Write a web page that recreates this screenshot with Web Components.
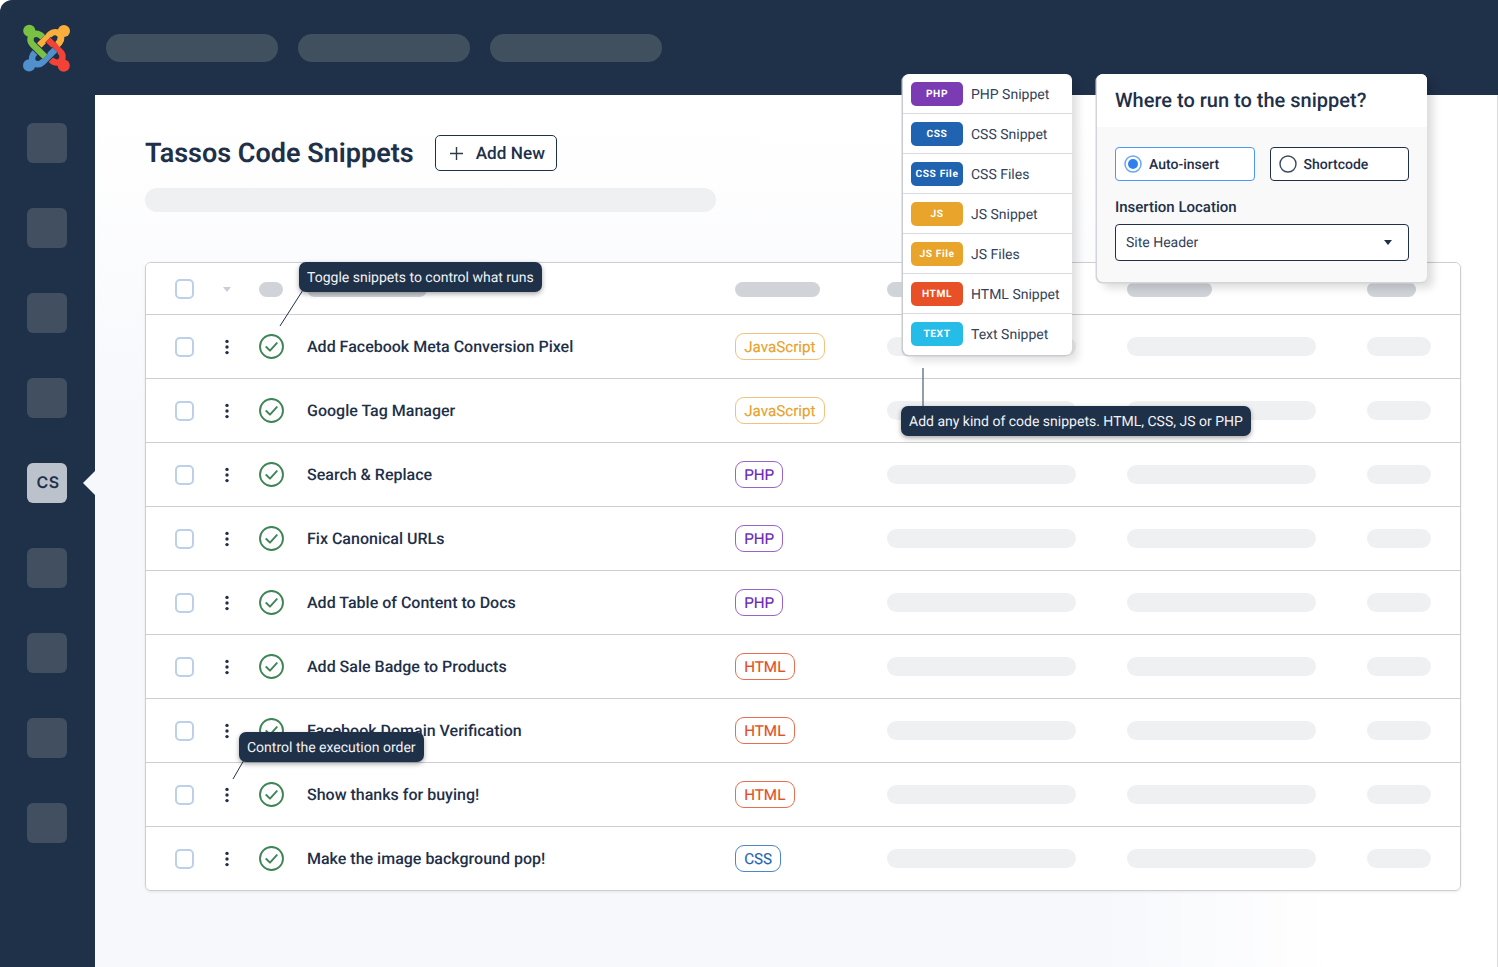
<!DOCTYPE html>
<html><head><meta charset="utf-8">
<style>
html,body{margin:0;padding:0;background:#fff;font-family:Roboto,"Liberation Sans",sans-serif;color:#1f3049;text-rendering:geometricPrecision}
body{width:1498px;height:967px;overflow:hidden}
</style></head><body>
<app-frame>
  <top-bar slot="top"></top-bar>
  <side-bar slot="side"></side-bar>
  <page-main slot="main">
    <page-head slot="head">Tassos Code Snippets</page-head>
    <snippet-table slot="table"></snippet-table>
  </page-main>
  <type-menu slot="over"></type-menu>
  <run-panel slot="over"></run-panel>
  <hint-tip slot="over" x="299" y="262" lx1="303" ly1="290" lx2="280" ly2="326">Toggle snippets to control what runs</hint-tip>
  <hint-tip slot="over" x="239" y="732" lx1="244" ly1="760" lx2="233" ly2="779">Control the execution order</hint-tip>
  <hint-tip slot="over" x="901" y="406" lx1="923" ly1="408" lx2="923" ly2="368" lc="#66758a" lw="1.4">Add any kind of code snippets. HTML, CSS, JS or PHP</hint-tip>
</app-frame>
<script>
const NAVY='#1f3049';
class Base extends HTMLElement{
  constructor(){super();this.attachShadow({mode:'open'});}
  connectedCallback(){if(!this._r){this._r=1;this.shadowRoot.innerHTML=`<style>${this.css()}</style>${this.html()}`;}}
  css(){return ''} html(){return '<slot></slot>'}
}
const def=(n,css,html)=>customElements.define(n,class extends Base{css(){return css(this)}html(){return html?html(this):'<slot></slot>'}});

def('app-frame',()=>`:host{display:grid;grid-template-columns:95px 1fr;grid-template-rows:95px 1fr;width:1498px;height:967px;background:${NAVY};border-top-left-radius:12px;position:relative;overflow:hidden}
 .t{grid-column:1/3;display:block}`,
 ()=>`<div class="t"><slot name="top"></slot></div><slot name="side"></slot><slot name="main"></slot><slot name="over"></slot>`);

def('j-logo',()=>`:host{display:block;width:50px;height:50px;flex:none}svg{display:block}`,()=>{
  const limb='M42.8 36.8 C38.5 32 32 32 30.6 37.5 C30 40.5 30.8 42.2 32.4 43.8 L45 56.2';
  const rots=[0,90,180,270],cols=['#7ac143','#fbae3c','#f44336','#5091cd'];
  const items=[1,2,3,0].map(i=>`<g transform="rotate(${rots[i]} 46.5 47.7)"><path d="${limb}" fill="none" stroke="${NAVY}" stroke-width="8.2"/><path d="${limb}" fill="none" stroke="${cols[i]}" stroke-width="6.4"/><circle cx="29.3" cy="30.3" r="6.1" fill="${cols[i]}"/></g>`).join('');
  return `<svg width="50" height="50" viewBox="22 22.5 50 50">${items}<g transform="rotate(90 46.5 47.7)"><path d="M42.8 36.8 C40.5 34.2 38 33 35.5 33" fill="none" stroke="#fbae3c" stroke-width="6.4"/></g></svg>`;
});

def('skel-pill',e=>{const w=e.getAttribute('w'),h=e.getAttribute('h')||19,c=e.getAttribute('c')||'#eff0f2';
  return `:host{display:block;width:${w}px;height:${h}px;border-radius:${h/2}px;background:${c};flex:none}`},()=>'');

def('top-bar',()=>`:host{display:flex;height:95px;align-items:center;padding-left:22px;box-sizing:border-box}
 .p{display:flex;gap:20px;margin-left:34px}`,
 ()=>`<j-logo></j-logo><div class="p"><skel-pill w="172" h="28" c="#40505f"></skel-pill><skel-pill w="172" h="28" c="#40505f"></skel-pill><skel-pill w="172" h="28" c="#40505f"></skel-pill></div>`);

def('side-tile',e=>{const a=e.hasAttribute('active');return `:host{display:flex;width:40px;height:40px;box-sizing:border-box;padding:0 0 2px 2px;border-radius:6px;background:${a?'#bcc2cc':'#414f61'};align-items:center;justify-content:center;position:relative;font:600 16px Inter,Roboto,sans-serif;letter-spacing:.3px;color:${NAVY}}
 ${a?':host::after{content:"";position:absolute;left:56px;top:8px;border-style:solid;border-color:transparent #f6f8fc transparent transparent;border-width:12px 12px 12px 0}':''}`});

def('side-bar',()=>`:host{display:flex;flex-direction:column;gap:45px;box-sizing:border-box;padding:28px 0 0 27px}`,
 ()=>Array.from({length:9},(_,i)=>i==4?'<side-tile active>CS</side-tile>':'<side-tile></side-tile>').join(''));

def('page-main',()=>`:host{display:block;box-sizing:border-box;padding:40px 0 0 50px;border-right:1px solid #dcdcdc;
 background:linear-gradient(90deg,rgba(255,255,255,0) 1000px,#fff 1240px),linear-gradient(180deg,#fff 30px,#f7f8fc 320px)}
 .sk{margin:17px 0 50px}`,
 ()=>`<slot name="head"></slot><div class="sk"><skel-pill w="571" h="24"></skel-pill></div><slot name="table"></slot>`);

def('page-head',()=>`:host{display:flex;align-items:center;gap:21px;height:36px}
 h1{margin:0;font:600 27px Roboto,sans-serif;color:${NAVY};white-space:nowrap}`,
 ()=>`<h1><slot></slot></h1><add-button>Add New</add-button>`);

def('add-button',()=>`:host{display:flex;align-items:center;box-sizing:border-box;width:122px;height:36px;border:1px solid ${NAVY};border-radius:5px;padding-left:14px;gap:13px;font:500 17.2px Roboto,sans-serif;color:${NAVY};background:#fff}svg{display:block}span{padding-top:2px}`,
 ()=>`<svg width="13" height="13" viewBox="0 0 13 13"><path d="M6.5 0v13M0 6.5h13" stroke="#2f3a48" stroke-width="1.4" fill="none"/></svg><span><slot></slot></span>`);

def('row-check',()=>`:host{display:block;width:19px;height:20px;box-sizing:border-box;border:2px solid #bdd0e9;border-radius:5px;background:#fff}`,()=>'');
def('row-dots',()=>`:host{display:block;width:8px;height:16px}svg{display:block}`,
 ()=>`<svg width="8" height="16" viewBox="0 0 8 16"><circle cx="4" cy="2.4" r="1.7" fill="${NAVY}"/><circle cx="4" cy="8" r="1.7" fill="${NAVY}"/><circle cx="4" cy="13.6" r="1.7" fill="${NAVY}"/></svg>`);
def('status-ok',()=>`:host{display:block;width:25px;height:25px}svg{display:block}`,
 ()=>`<svg width="25" height="25" viewBox="0 0 25 25"><circle cx="12.5" cy="12.5" r="11.5" fill="none" stroke="#3f8557" stroke-width="1.9"/><path d="M7.3 13l3.7 3.7 6.8-7.6" fill="none" stroke="#3f8557" stroke-width="1.9" stroke-linecap="round" stroke-linejoin="round"/></svg>`);

const LANG={js:['#e8a22f','#f2c27a'],php:['#6b2bb5','#9a62cc'],html:['#e34f26','#ea6d4e'],css:['#1f64b0','#4a86c8']};
def('lang-tag',e=>{const [c,b]=LANG[e.getAttribute('k')];return `:host{display:inline-flex;justify-self:start;align-items:center;box-sizing:border-box;height:27.5px;padding:0 8.2px;border:1px solid ${b};border-radius:9px;font:400 15.2px Roboto,sans-serif;color:${c};background:#fff;-webkit-text-stroke:.15px ${c}}`});

const GRID=`display:grid;grid-template-columns:48px 36px 48px 428px 152px 240px 240px auto;align-items:center;box-sizing:border-box;padding-left:29px;background:#fff`;
def('snippet-row',()=>`:host{${GRID};height:64px;border-top:1px solid #ccced2}
 .t{font:500 16px Roboto,sans-serif;color:${NAVY};white-space:nowrap}`,
 e=>`<row-check></row-check><row-dots></row-dots><status-ok></status-ok><span class="t"><slot></slot></span><lang-tag k="${e.getAttribute('k')}">${e.getAttribute('l')}</lang-tag><skel-pill w="189"></skel-pill><skel-pill w="189"></skel-pill><skel-pill w="64"></skel-pill>`);

def('table-head',()=>`:host{${GRID};height:51px}
 .c{width:0;height:0;border-style:solid;border-color:#c9ced6 transparent transparent;border-width:5px 4px 0;margin-top:1px}
 skel-pill{margin-top:1px}`,
 ()=>{const c='#d0d4d9';return `<row-check></row-check><div class="c"></div><skel-pill w="24" h="15" c="${c}"></skel-pill><skel-pill w="120" h="15" c="${c}"></skel-pill><skel-pill w="85" h="15" c="${c}"></skel-pill><skel-pill w="85" h="15" c="${c}"></skel-pill><skel-pill w="85" h="15" c="${c}"></skel-pill><skel-pill w="49" h="15" c="${c}"></skel-pill>`});

const ROWS=[['Add Facebook Meta Conversion Pixel','js','JavaScript'],['Google Tag Manager','js','JavaScript'],['Search &amp; Replace','php','PHP'],['Fix Canonical URLs','php','PHP'],['Add Table of Content to Docs','php','PHP'],['Add Sale Badge to Products','html','HTML'],['Facebook Domain Verification','html','HTML'],['Show thanks for buying!','html','HTML'],['Make the image background pop!','css','CSS']];
def('snippet-table',()=>`:host{display:block;width:1316px;box-sizing:border-box;border:1px solid #ccced2;border-radius:6px;background:#fff;overflow:hidden;box-shadow:0 1px 3px rgba(0,0,0,.08)}`,
 ()=>`<table-head></table-head>`+ROWS.map(r=>`<snippet-row k="${r[1]}" l="${r[2]}">${r[0]}</snippet-row>`).join(''));

const TY={php:'#7b3bb3',css:'#2063b0',js:'#e8a42b',html:'#e85027',text:'#26bce8'};
def('type-row',e=>`:host{display:flex;align-items:center;gap:8px;height:40px;box-sizing:border-box;padding-left:8px;border-bottom:1px solid #d9dade;font:400 14px Roboto,sans-serif;color:#34435a;white-space:nowrap}
 :host(:last-child){border-bottom:0;height:41px;padding-bottom:1px}
 span{padding-top:2px}
 b{display:flex;align-items:center;justify-content:center;box-sizing:border-box;padding-top:1px;width:52px;height:24px;border-radius:5px;background:${TY[e.getAttribute('k')]};color:#fff;font:700 10.2px Roboto,sans-serif;letter-spacing:.6px}`,
 e=>`<b>${e.getAttribute('b')}</b><span><slot></slot></span>`);
def('type-menu',()=>`:host{position:absolute;left:903px;top:74px;width:169px;background:#fff;border-radius:6px;box-shadow:-1px 1px 0 .5px #c9cbd0,6px 6px 8px rgba(0,0,0,.12);z-index:5;display:block}`,
 ()=>[['php','PHP','PHP Snippet'],['css','CSS','CSS Snippet'],['css','CSS File','CSS Files'],['js','JS','JS Snippet'],['js','JS File','JS Files'],['html','HTML','HTML Snippet'],['text','TEXT','Text Snippet']].map(r=>`<type-row k="${r[0]}" b="${r[1]}">${r[2]}</type-row>`).join(''));

def('radio-box',e=>{const a=e.hasAttribute('on');return `:host{display:flex;align-items:center;gap:7px;box-sizing:border-box;width:139.5px;height:34px;padding-left:8px;background:#fff;border:1px solid ${a?'#4d97f5':NAVY};border-radius:4px;font:500 14px Roboto,sans-serif;color:${NAVY}}
 span{padding-top:2px}svg{display:block;flex:none}`},
 e=>(e.hasAttribute('on')?`<svg width="18" height="18" viewBox="0 0 18 18"><circle cx="9" cy="9" r="8" fill="none" stroke="#6aa7f5" stroke-width="1.5"/><circle cx="9" cy="9" r="5" fill="#2f80ed"/></svg>`:`<svg width="18" height="18" viewBox="0 0 18 18"><circle cx="9" cy="9" r="8" fill="none" stroke="#3a4a5e" stroke-width="1.4"/></svg>`)+`<span><slot></slot></span>`);

def('select-box',()=>`:host{display:flex;align-items:center;justify-content:space-between;box-sizing:border-box;height:37px;padding:0 16.5px 0 10px;background:#fff;border:1px solid ${NAVY};border-radius:4px;font:400 14px Roboto,sans-serif;color:#33425a}
 i{width:0;height:0;border-style:solid;border-color:${NAVY} transparent transparent;border-width:5px 4.5px 0}`,
 ()=>`<span><slot></slot></span><i></i>`);

def('run-panel',()=>`:host{position:absolute;left:1097px;top:74px;width:330px;height:208px;display:flex;flex-direction:column;border-radius:6px;background:#f9f9f9;box-shadow:-1px 1px 0 .5px #d4d5d8,6px 6px 8px rgba(0,0,0,.14);z-index:5}
 header{height:53px;box-sizing:border-box;padding:0 18px 2px;background:#fff;border-radius:6px 6px 0 0;display:flex;align-items:center;font:500 20px Roboto,sans-serif;color:${NAVY};white-space:nowrap}
 .b{padding:20px 18px 0}
 .r{display:flex;gap:15px}
 label{display:block;margin:18px 0 9px;font:500 15px/16px Roboto,sans-serif;color:${NAVY}}`,
 ()=>`<header>Where to run to the snippet?</header><div class="b"><div class="r"><radio-box on>Auto-insert</radio-box><radio-box>Shortcode</radio-box></div><label>Insertion Location</label><select-box>Site Header</select-box></div>`);

def('hint-tip',e=>`:host{position:absolute;left:${e.getAttribute('x')}px;top:${e.getAttribute('y')}px;z-index:7;display:block}
 .b{position:relative;height:30px;box-sizing:border-box;padding:0 8px;display:flex;align-items:center;background:${NAVY};border-radius:7px;color:#f1f3f6;font:400 14px Roboto,sans-serif;white-space:nowrap;box-shadow:0 2px 5px rgba(0,0,0,.35)}
 span{padding-top:2px}
 svg{position:absolute;left:0;top:0;overflow:visible;display:block}`,
 e=>{const x=+e.getAttribute('x'),y=+e.getAttribute('y'),g=k=>+e.getAttribute(k);
  return `<svg width="1" height="1"><line x1="${g('lx1')-x}" y1="${g('ly1')-y}" x2="${g('lx2')-x}" y2="${g('ly2')-y}" stroke="${e.getAttribute('lc')||NAVY}" stroke-width="${e.getAttribute('lw')||1}"/></svg><div class="b"><span><slot></slot></span></div>`});
</script>
</body></html>
